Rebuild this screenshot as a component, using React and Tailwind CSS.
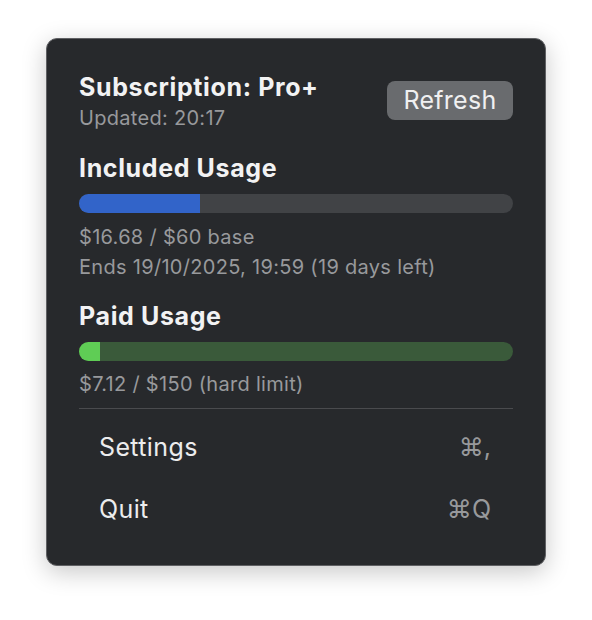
import React from "react";

function Bar({ value, max, track, fill }) {
  const pct = Math.min(100, (value / max) * 100);
  return (
    <div className={`mt-[13px] h-[19px] w-full rounded-full overflow-hidden ${track}`}>
      <div className={`h-full ${fill}`} style={{ width: `${pct}%` }} />
    </div>
  );
}

export default function App() {
  return (
    <div
      className="min-h-screen bg-white pt-[38px] pl-[46px]"
      style={{ fontFamily: "Inter, 'Noto Sans', sans-serif" }}
    >
      <div className="w-[500px] h-[528px] rounded-[11px] border border-[#5f6063] bg-[#27292c] shadow-[0_6px_24px_rgba(0,0,0,0.22)] px-8 pt-[35px]">
        <div className="flex items-start justify-between">
          <div>
            <div className="text-[25px] leading-[26px] font-bold tracking-[0.025em] text-[#f2f2f3]">Subscription: Pro+</div>
            <div className="text-[20px] leading-[22px] mt-[7px] tracking-[0.015em] text-[#98999c]">Updated: 20:17</div>
          </div>
          <button className="mt-[7px] h-[39px] w-[126px] rounded-[8px] bg-[#696b6e] text-[25px] tracking-[0.01em] text-[#f0f0f1]">
            Refresh
          </button>
        </div>

        <div className="mt-[26px] text-[25px] leading-[26px] font-bold tracking-[0.025em] text-[#f2f2f3]">Included Usage</div>
        <Bar value={16.68} max={60} track="bg-[#414346]" fill="bg-[#3264c9]" />
        <div className="mt-[13px] text-[20px] leading-[22px] tracking-[0.015em] text-[#98999c]">$16.68 / $60 base</div>
        <div className="mt-[8px] text-[20px] leading-[22px] tracking-[0.015em] text-[#98999c]">Ends 19/10/2025, 19:59 (19 days left)</div>

        <div className="mt-[25px] text-[25px] leading-[26px] font-bold tracking-[0.025em] text-[#f2f2f3]">Paid Usage</div>
        <Bar value={7.12} max={150} track="bg-[#3a5a3a]" fill="bg-[#5fcd55]" />
        <div className="mt-[12px] text-[20px] leading-[22px] tracking-[0.015em] text-[#98999c]">$7.12 / $150 (hard limit)</div>

        <div className="mt-[13px] h-px bg-[#4a4b4e]" />

        <div className="mt-[8px]">
          <div className="flex h-[62px] items-center justify-between pl-5 pr-[22px]">
            <span className="text-[25px] tracking-[0.015em] text-[#ececed]">Settings</span>
            <span className="text-[25px] text-[#98999c]">⌘,</span>
          </div>
          <div className="flex h-[62px] items-center justify-between pl-5 pr-[22px]">
            <span className="text-[25px] tracking-[0.015em] text-[#ececed]">Quit</span>
            <span className="text-[25px] text-[#98999c]">⌘Q</span>
          </div>
        </div>
      </div>
    </div>
  );
}
